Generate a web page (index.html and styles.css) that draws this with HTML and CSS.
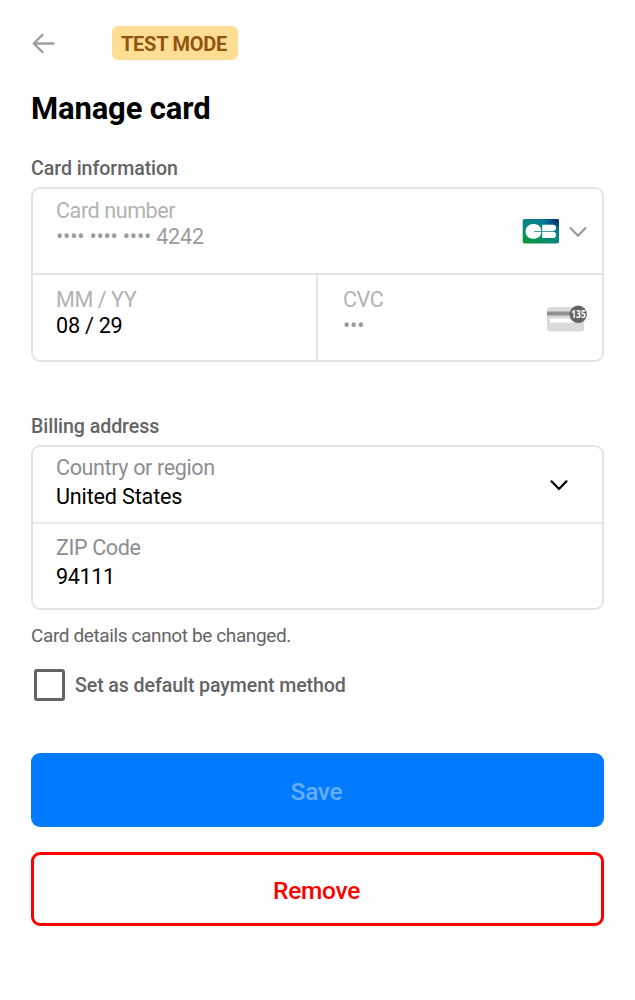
FILE: index.html
```html
<!DOCTYPE html>
<html lang="en">
<head>
<meta charset="utf-8">
<title>Manage card</title>
<link rel="stylesheet" href="styles.css">
</head>
<body>
<main class="sheet">
  <header class="topbar">
    <svg class="back" width="24" height="22" viewBox="0 0 24 22"><path d="M21.500 10.500H2M10.500 1.800 1.700 10.500 10.500 19.200" fill="none" stroke="#9f9f9f" stroke-width="2.400" stroke-linecap="round" stroke-linejoin="round"/></svg>
    <span class="badge"><span>TEST MODE</span></span>
  </header>
  <h1 class="title">Manage card</h1>
  <h2 class="section">Card information</h2>
  <section class="box">
    <div class="field number">
      <div class="copy"><div class="label dim">Card number</div><div class="value masked">•••• •••• •••• 4242</div></div>
      <div class="brand">
        <svg width="37" height="25" viewBox="0 0 37 25">
          <defs>
            <linearGradient id="cbBase" x1="0" y1="1" x2=".7" y2="0"><stop offset="0" stop-color="#0a9a2c"/><stop offset=".45" stop-color="#078a78"/><stop offset="1" stop-color="#067a9c"/></linearGradient>
            <radialGradient id="cbNight" cx="1" cy="0" r=".6"><stop offset="0" stop-color="#06205c"/><stop offset=".4" stop-color="#064684" stop-opacity=".8"/><stop offset="1" stop-color="#067a9c" stop-opacity="0"/></radialGradient>
          </defs>
          <rect x=".7" width="36.300" height="24.500" rx="2" fill="url(#cbBase)"/>
          <rect x=".7" width="36.300" height="24.500" rx="2" fill="url(#cbNight)"/>
          <path d="M19.400 11.900H12V12.700H19.400C19.200 17 15.900 19.800 11.400 19.800 6.900 19.800 3.600 16.500 3.600 12.400S6.900 5 11.400 5C15.900 5 19.200 7.700 19.400 11.900Z" fill="#fff"/>
          <path d="M20.200 5.700H30.900A3.100 3.100 0 0 1 30.900 11.900H20.200ZM20.200 12.800H30.900A3.100 3.100 0 0 1 30.900 19H20.200Z" fill="#fff"/>
        </svg>
        <svg width="20" height="12" viewBox="0 0 20 12"><path d="M2.500 2 10 9.700 17.500 2" fill="none" stroke="#999" stroke-width="2.100" stroke-linecap="round" stroke-linejoin="round"/></svg>
      </div>
    </div>
    <div class="split">
      <div class="field expiry"><div class="label dim">MM / YY</div><div class="value date">08 / 29</div></div>
      <div class="field cvc">
        <div class="copy"><div class="label dim">CVC</div><div class="value masked">•••</div></div>
        <svg class="cvc-icon" width="42" height="28" viewBox="0 0 42 28">
          <rect x="1" y="3" width="37" height="24.500" rx="3" fill="#dadada"/>
          <rect x="1" y="7.500" width="37" height="4" fill="#919191"/>
          <rect x="4" y="14.500" width="31" height="4" rx=".5" fill="#fff"/>
          <circle cx="32.200" cy="10.300" r="8.700" fill="#646464"/>
          <text class="cvc-digits" x="32.500" y="14" text-anchor="middle" textLength="14.500" lengthAdjust="spacingAndGlyphs">135</text>
        </svg>
      </div>
    </div>
  </section>
  <h2 class="section billing">Billing address</h2>
  <section class="box address">
    <div class="field country">
      <div class="copy"><div class="label">Country or region</div><div class="value">United States</div></div>
      <svg width="20" height="14" viewBox="0 0 20 14"><path d="M2.500 3.300 10 11 17.500 3.300" fill="none" stroke="#000" stroke-width="2.200" stroke-linecap="round" stroke-linejoin="round"/></svg>
    </div>
    <div class="field zip"><div class="label">ZIP Code</div><div class="value zip-value">94111</div></div>
  </section>
  <p class="note">Card details cannot be changed.</p>
  <div class="default"><span class="check"></span><span>Set as default payment method</span></div>
  <button class="btn save" disabled>Save</button>
  <button class="btn remove">Remove</button>
</main>
</body>
</html>
```
FILE: styles.css
```css
* { box-sizing: border-box; }
body { margin: 0; background: #fff; font-family: Roboto, sans-serif; color: #000; }
.sheet { display: flex; flex-direction: column; padding: 26px 31px 0; }
.topbar { display: flex; align-items: center; height: 34px; }
.back { margin-left: 1px; margin-top: 1px; }
.badge { display: flex; align-items: center; justify-content: center; width: 126px; height: 34px; margin-left: 56px; border-radius: 6px; background: #ffdd93; color: #8f560f; font-size: 20px; font-weight: 700; letter-spacing: -.25px; padding: 2px 2px 0 0; white-space: nowrap; }
.title { margin: 31px 0 0; font-size: 31px; line-height: 36px; font-weight: 700; letter-spacing: -.15px; }
.section { margin: 30px 0 0; height: 30px; font-size: 19.6px; line-height: 24px; font-weight: 500; letter-spacing: -.07px; color: #646464; }
.box { height: 175px; border: 2px solid #e4e4e4; border-radius: 9px; }
.field { padding: 8px 14px 0 23px; }
.number { display: flex; justify-content: space-between; height: 86px; padding-top: 9px; border-bottom: 2px solid #e4e4e4; }
.label { font-size: 21.6px; line-height: 26px; letter-spacing: -.4px; color: #8d8d92; }
.label.dim { color: #b2b2b2; letter-spacing: -.45px; }
.value { font-size: 21.6px; line-height: 26px; letter-spacing: -.17px; }
.masked { color: #9c9c9c; letter-spacing: -.22px; }
.date { letter-spacing: -.25px; }
.brand { display: flex; align-items: center; gap: 9px; height: 25px; margin-top: 21px; }
.split { display: flex; height: 85px; }
.expiry { width: 285px; padding-top: 12px; border-right: 2px solid #e4e4e4; }
.cvc { display: flex; flex: 1; justify-content: space-between; padding: 12px 14px 0 25px; }
.cvc-icon { margin-top: 17px; }
.cvc-digits { font-family: "Open Sans", sans-serif; font-size: 10px; font-weight: 700; fill: #fff; }
.section.billing { margin-top: 53px; height: 30px; }
.address { height: 165px; }
.country { display: flex; justify-content: space-between; height: 77px; padding: 8px 33px 0 23px; border-bottom: 2px solid #e9e9e9; }
.country svg { margin-top: 23px; }
.address .value { line-height: 31px; }
.address .zip-value { letter-spacing: -.4px; }
.zip { padding-top: 11px; }
.note { margin: 14px 0 0; font-size: 19px; line-height: 24px; letter-spacing: -.38px; color: #646464; }
.default { display: flex; align-items: center; gap: 10px; height: 32px; margin: 21px 0 0 3px; font-size: 19.6px; font-weight: 500; letter-spacing: -.1px; color: #646464; }
.check { width: 31px; height: 32px; border: 3px solid #646464; border-radius: 3px; }
.btn { height: 74px; padding: 0; border: 0; border-radius: 9px; font-family: inherit; font-size: 24.5px; font-weight: 500; letter-spacing: -.3px; }
.save { margin-top: 52px; padding: 3px 2px 0 0; background: #007aff; color: #66afff; }
.remove { margin-top: 25px; padding: 3px 2px 0 0; border: 3px solid #f00; background: #fff; color: #f00; }
```
